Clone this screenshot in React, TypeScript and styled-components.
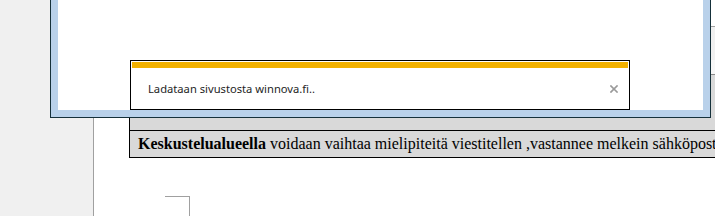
import React from "react";
import styled, { createGlobalStyle } from "styled-components";

const GlobalStyle = createGlobalStyle`
  html, body {
    margin: 0;
    padding: 0;
    overflow: hidden;
  }
  body {
    font-family: "Liberation Serif", "Times New Roman", serif;
  }
`;

const Page = styled.div`
  position: relative;
  display: flex;
  width: 715px;
  height: 216px;
  overflow: hidden;
`;

const Sidebar = styled.aside`
  flex: 0 0 93px;
  background-color: #f0f0f0;
  border-right: 1px solid #a0a0a0;
`;

const Content = styled.main`
  flex: 1 0 0%;
  background-color: #ffffff;
  display: flex;
  flex-direction: column;
  min-width: 0;
`;

const TopStrip = styled.div`
  height: 28px;
  border-bottom: 1px solid #a0a0a0;
  background-color: #ffffff;
`;

const ToolStrip = styled.div<{ $tone: string; $h: number }>`
  height: ${(p) => p.$h}px;
  background-color: ${(p) => p.$tone};
`;

const Table = styled.div`
  margin-left: 35px;
  width: 700px;
  border-left: 1px solid #000;
  border-top: 1px solid #8a8a8a;
  border-bottom: 1px solid #000;
  background-color: #d9d9d9;
`;

const Row = styled.div<{ $h: number }>`
  height: ${(p) => p.$h}px;
  display: flex;
  align-items: center;
  padding-left: 8px;
  white-space: nowrap;
  font-family: "Liberation Serif", "Times New Roman", serif;
  font-size: 16px;
  color: #000;
  & + & {
    border-top: 1px solid #000;
  }
`;

const Corner = styled.div`
  margin: 38px 0 0 71px;
  width: 24px;
  height: 20px;
  border-top: 1px solid #a0a0a0;
  border-right: 1px solid #a0a0a0;
`;

const Window = styled.div`
  position: absolute;
  left: 50px;
  top: -40px;
  width: 661px;
  height: 158px;
  box-sizing: border-box;
  border: 1px solid #15303a;
  background-color: #b9d1ea;
  padding: 0 7px 7px 7px;
  display: flex;
`;

const Pane = styled.div`
  flex: 1 0 0%;
  background-color: #ffffff;
`;

const Dialog = styled.div`
  position: absolute;
  left: 130px;
  top: 60px;
  width: 500px;
  height: 50px;
  box-sizing: border-box;
  border: 1px solid #000;
  padding: 1px;
  background-color: #fff;
  display: flex;
  flex-direction: column;
`;

const Progress = styled.div`
  height: 6px;
  background-color: #f2b100;
`;

const DialogBody = styled.div`
  flex: 1 0 0%;
  display: flex;
  align-items: center;
  padding: 0 9px 0 16px;
`;

const Message = styled.span`
  flex: 1 0 0%;
  font-family: "Noto Sans", "Open Sans", sans-serif;
  font-size: 11.2px;
  color: #1e1e1e;
`;

const Close = styled.button`
  border: 0;
  background: none;
  padding: 0;
  width: 10px;
  height: 10px;
  display: flex;
  align-items: center;
  justify-content: center;
  margin-top: 1px;
`;

export default function App() {
  return (
    <>
      <GlobalStyle />
      <Page>
        <Sidebar />
        <Content>
          <TopStrip />
          <ToolStrip $tone="#f0f0f0" $h={36} />
          <ToolStrip $tone="#f7f7f7" $h={15} />
          <Table>
            <Row $h={55} />
            <Row $h={26}>
              <span>
                <b>Keskustelualueella</b> voidaan vaihtaa mielipiteitä
                viestitellen ,vastannee melkein sähköpost
              </span>
            </Row>
          </Table>
          <Corner />
        </Content>

        <Window>
          <Pane />
        </Window>

        <Dialog>
          <Progress />
          <DialogBody>
            <Message>Ladataan sivustosta winnova.fi..</Message>
            <Close aria-label="Sulje">
              <svg width="8" height="8" viewBox="0 0 8 8">
                <path d="M1 1 L7 7 M7 1 L1 7" stroke="#9a9a9a" strokeWidth="1.7" strokeLinecap="square" />
              </svg>
            </Close>
          </DialogBody>
        </Dialog>
      </Page>
    </>
  );
}
